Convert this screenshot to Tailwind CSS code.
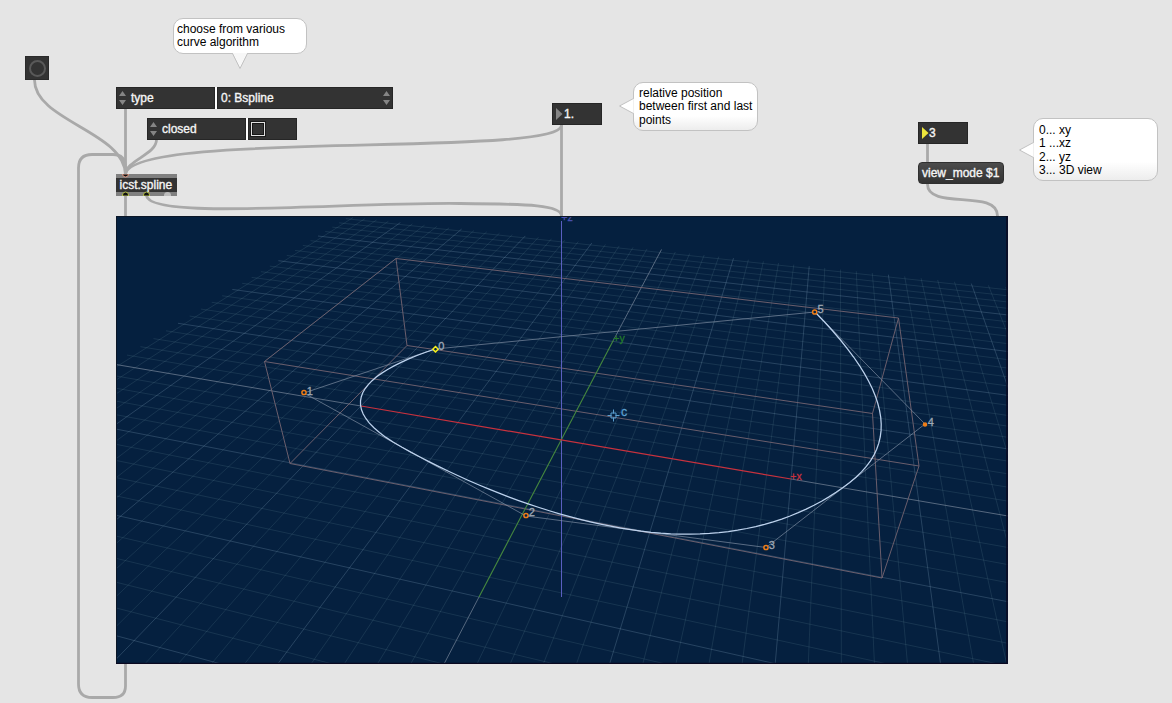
<!DOCTYPE html>
<html lang="en">
<head>
<meta charset="utf-8">
<title>icst.spline</title>
<script src="https://cdn.jsdelivr.net/npm/@tailwindcss/browser@4"></script>
</head>
<body class="bg-[#e5e5e5] overflow-hidden">
<main class="relative w-[1172px] h-[703px] overflow-hidden bg-[#e5e5e5] text-[12px] font-['Liberation_Sans',Arial,sans-serif]">

  <!-- 3D viewport -->
  <section class="absolute left-[116px] top-[216px] w-[892px] h-[448px] bg-[#05203f] overflow-hidden">
    <svg class="block w-full h-full" viewBox="116 216 892 448" fill="none">
      <g id="minor" stroke="#8ab0b8" stroke-opacity=".14"></g>
      <g id="major" stroke="#94b4cc" stroke-opacity=".24"></g>
      <g stroke="#8894a6" stroke-opacity=".62">
        <path d="M116 364.5 361 406M791 479 1008 516M661.500 249.500 613.500 340M479 597 444 664"/>
      </g>
      <path d="M264.500 361.500 396 258.500 898.500 318 919 466 264.500 361.500 290 463.500 882 578 872.500 413.500 407 345.500 290 463.500M396 258.500 407 345.500M898.500 318 872.500 413.500M919 466 882 578" stroke="#756571" stroke-opacity=".9"/>
      <path d="M561.500 221V597" stroke="#5a5fc0"/>
      <path d="M479 597 613.500 340" stroke="#46883f" stroke-width="1.1"/>
      <path d="M361 406 791 479" stroke="#c8323e" stroke-width="1.2"/>
      <path d="M435 349 304 393 526 516 766 547.500 925 424 815 312 435 349" stroke="#8795a9" stroke-opacity=".65"/>
      <path id="curve" stroke="#bdd2ed" stroke-width="1.25"/>
      <g stroke="#ee7d18" stroke-width="1.5" fill="#05203f">
        <circle cx="304" cy="392.500" r="2.100"/>
        <circle cx="526" cy="515.500" r="2.100"/>
        <circle cx="766" cy="547.500" r="2.100"/>
        <circle cx="814.700" cy="312" r="2.100"/>
        <circle cx="925" cy="424.500" r="1.500" fill="#ee7d18"/>
        <path d="M435.500 346.500 438.200 349.200 435.500 351.900 432.800 349.200Z" stroke="#f4ee1e"/>
      </g>
      <path d="M611 413h5v5h-5zM613.500 409.500v4M613.500 417.500v4M607.500 415.500h4M615.500 415.500h4" stroke="#5b9fd0"/>
      <g font-family="Liberation Sans" font-size="11" fill="#9fa8b5" stroke="#9fa8b5" stroke-width=".3">
        <text x="438.300" y="350">0</text>
        <text x="306.800" y="394.500">1</text>
        <text x="528.800" y="516">2</text>
        <text x="768.800" y="549">3</text>
        <text x="927.800" y="426">4</text>
        <text x="817.500" y="313">5</text>
        <text x="621" y="415.500" fill="#5b9fd0" stroke="#5b9fd0" font-size="12.5">c</text>
        <text x="790.300" y="479.500" fill="#c8323e" stroke="#c8323e" font-size="10.5">+x</text>
        <text x="613.300" y="341.500" fill="#237a2c" stroke="#237a2c" font-size="10.5">+y</text>
        <text x="561.300" y="221" fill="#4a51b0" stroke="#4a51b0" font-size="10.5">+z</text>
      </g>
      <path d="M116.500 664V216.500H1007.500" stroke="#0b1626"/>
      <path d="M1007 216V663.500H116" stroke="#0a0820" stroke-width="1.500"/>
    </svg>
  </section>

  <!-- patch cords -->
  <svg class="absolute left-0 top-0" width="1172" height="703" fill="none" stroke="#a9a9a9" stroke-width="2.800">
    <path d="M34.500 80C34.500 121 125.500 132 125.500 175"/>
    <path d="M125.500 109V175"/>
    <path d="M156.500 139.500C156.500 155 125.500 160 125.500 175"/>
    <path d="M561.500 125C561.500 158 125.500 130 125.500 175"/>
    <path d="M125.500 195V216M561.500 125V216"/>
    <path d="M146.500 195C146.500 221 345 202 460 203.500 530 204 561.500 205 561.500 216"/>
    <path d="M125.500 664V686Q125.500 697.500 113 697.500H92Q78.500 697.500 78.500 684V168Q78.500 154.500 92 154.500H113Q125.500 154.500 125.500 168V175"/>
    <path d="M927.500 144V162M927.500 184C927.500 211 997.500 188 997.500 216"/>
  </svg>

  <!-- bang -->
  <div class="absolute left-[25px] top-[56px] w-6 h-6 bg-[#333333] border border-[#2a2a2a] flex items-center justify-center">
    <div class="w-[17px] h-[17px] rounded-full border-2 border-[#595959]"></div>
  </div>

  <!-- attrui: type -->
  <div class="absolute left-[116px] top-[87px] w-[277px] h-[22px] flex gap-[2px] bg-white text-[#f5f5f5] [-webkit-text-stroke:0.35px_#f5f5f5]">
    <div class="w-[99px] bg-[#333333] border border-[#262626] flex items-center pl-[2px] gap-[5px]">
      <svg class="shrink-0" width="7" height="14" fill="#858585"><path d="M3.500 0 7 5H0ZM0 9H7L3.500 14Z"/></svg><span>type</span>
    </div>
    <div class="flex-1 bg-[#333333] border border-[#262626] flex items-center justify-between pl-[3px] pr-[2px]">
      <span>0: Bspline</span><svg width="7" height="14" fill="#858585"><path d="M3.500 0 7 5H0ZM0 9H7L3.500 14Z"/></svg>
    </div>
  </div>

  <!-- attrui: closed -->
  <div class="absolute left-[147px] top-[118px] w-[150px] h-[22px] flex gap-[2px] bg-white text-[#f5f5f5] [-webkit-text-stroke:0.35px_#f5f5f5]">
    <div class="w-[99px] bg-[#333333] border border-[#262626] flex items-center pl-[2px] gap-[5px]">
      <svg class="shrink-0" width="7" height="14" fill="#858585"><path d="M3.500 0 7 5H0ZM0 9H7L3.500 14Z"/></svg><span>closed</span>
    </div>
    <div class="flex-1 bg-[#333333] border border-[#262626] flex items-center pl-[2px]">
      <div class="w-[14px] h-[14px] border-[1.5px] border-[#e0e0e0] outline outline-[#1a1a1a] bg-[#333] shadow-[inset_0_0_0_1px_#161616]"></div>
    </div>
  </div>

  <!-- icst.spline object -->
  <div class="absolute left-[116px] top-[174px] w-[61px] h-[22px] bg-[#333333] border-y-4 border-[#808080] flex items-center pl-[3.500px] text-[#f5f5f5] [-webkit-text-stroke:0.35px_#f5f5f5]">icst.spline</div>
  <svg class="absolute left-[116px] top-[174px]" width="61" height="22" fill="none">
    <path d="M6.500 0A3 3 0 0 0 12.500 0Z" fill="#111" stroke="#e29b86"/>
    <path d="M6.500 22V21A3 3 0 0 1 12.500 21V22ZM27.500 22V21A3 3 0 0 1 33.500 21V22Z" fill="#111" stroke="#b3bf49"/>
    <path d="M48 22V21.500A3.300 3.300 0 0 1 55 21.500V22Z" fill="#bcbcbc"/>
  </svg>

  <!-- float number box -->
  <div class="absolute left-[552px] top-[103px] w-[50px] h-[22px] bg-[#333333] border border-[#262626] flex items-center pl-[3px] gap-px text-[#f5f5f5] [-webkit-text-stroke:0.35px_#f5f5f5]">
    <svg width="7" height="12" fill="#858585"><path d="M0 0 6.500 6 0 12Z"/></svg><span>1.</span>
  </div>

  <!-- integer number box -->
  <div class="absolute left-[918px] top-[122px] w-[50px] h-[22px] bg-[#333333] border border-[#262626] flex items-center pl-[3px] text-[#f5f5f5] [-webkit-text-stroke:0.35px_#f5f5f5]">
    <svg width="7" height="12" fill="#ece53c"><path d="M0 0 6.500 6 0 12Z"/></svg><span>3</span>
  </div>

  <!-- message box -->
  <div class="absolute left-[918px] top-[162px] w-[86px] h-[22px] rounded-[4px] bg-linear-to-b from-[#4c4c4c] to-[#333333] border border-[#303030] flex items-center pl-[3px] whitespace-nowrap text-[#f5f5f5] [-webkit-text-stroke:0.35px_#f5f5f5]">view_mode $1</div>

  <!-- comment bubbles -->
  <div class="absolute left-[173px] top-[18px] w-[134px] h-[36px] rounded-[10px] border border-[#c2c2c2] bg-white pl-[3px] pt-[4px] leading-[13.400px] text-black whitespace-nowrap">choose from various<br>curve algorithm</div>
  <svg class="absolute left-[231px] top-[52px]" width="18" height="18" fill="none"><path d="M1.500 .500 9 16.500 16.500 .500Z" fill="#f7f7f7"/><path d="M1.500 1.500 9 16.500 16.500 1.500" stroke="#c2c2c2"/><path d="M2 .500H16" stroke="#fff"/></svg>

  <div class="absolute left-[633px] top-[82px] w-[125px] h-[49px] rounded-[10px] border border-[#c2c2c2] bg-linear-to-b from-white from-70% to-[#ededed] pl-[5px] pt-[4px] leading-[13.400px] text-black whitespace-nowrap">relative position<br>between first and last<br>points</div>
  <svg class="absolute left-[618px] top-[97px]" width="18" height="18" fill="none"><path d="M15.500 1.500 1.500 9 15.500 16.500" fill="#fff" stroke="#c2c2c2"/><path d="M16 2V16" stroke="#fff"/></svg>

  <div class="absolute left-[1033px] top-[118px] w-[125px] h-[63px] rounded-[10px] border border-[#c2c2c2] bg-linear-to-b from-white from-70% to-[#ededed] pl-[5px] pt-[5px] leading-[13.400px] text-black whitespace-nowrap">0... xy<br>1 ...xz<br>2... yz<br>3... 3D view</div>
  <svg class="absolute left-[1018px] top-[141px]" width="18" height="18" fill="none"><path d="M15.500 1.500 1.500 9 15.500 16.500" fill="#fff" stroke="#c2c2c2"/><path d="M16 2V16" stroke="#fff"/></svg>
</main>

<script>
// Ground plane: perspective projection of (x, y) to viewport pixels.
const project = (x, y) => {
  const w = 1 - 0.0674 * x + 0.2288 * y;
  return ((561.5 + 176.2 * x + 192.1 * y) / w).toFixed(2) + ' ' + ((440 + 6.7 * x - 20.4 * y) / w).toFixed(2);
};
const LIMIT = 2.44;
const lines = { minor: '', major: '' };
for (let i = -24; i <= 24; i++) {
  if (i === 0) continue;
  const k = i / 10;
  lines[i % 5 ? 'minor' : 'major'] +=
    'M' + project(k, -LIMIT) + 'L' + project(k, LIMIT) +
    'M' + project(-LIMIT, k) + 'L' + project(LIMIT, k);
}
for (const id in lines) {
  const p = document.createElementNS('http://www.w3.org/2000/svg', 'path');
  p.setAttribute('d', lines[id]);
  document.getElementById(id).appendChild(p);
}

// Clamped quadratic B-spline through the control polygon, third value is depth.
const P = [[435, 349, 1.26], [304, 393, 1.1], [526, 516, 0.87], [766, 547.5, 0.8], [925, 424, 0.89], [815, 312, 0.86]]
  .map(([x, y, w]) => [x * w, y * w, w]);
const mid = (a, b) => a.map((v, i) => (v + b[i]) / 2);
const knots = [P[0], mid(P[1], P[2]), mid(P[2], P[3]), mid(P[3], P[4]), P[5]];
let d = '';
for (let s = 0; s < 4; s++) {
  for (let j = s ? 1 : 0; j <= 24; j++) {
    const t = j / 24;
    const q = [0, 1, 2].map(i => (1 - t) ** 2 * knots[s][i] + 2 * t * (1 - t) * P[s + 1][i] + t * t * knots[s + 1][i]);
    d += (d ? 'L' : 'M') + (q[0] / q[2]).toFixed(2) + ' ' + (q[1] / q[2]).toFixed(2);
  }
}
document.getElementById('curve').setAttribute('d', d);
</script>
</body>
</html>
